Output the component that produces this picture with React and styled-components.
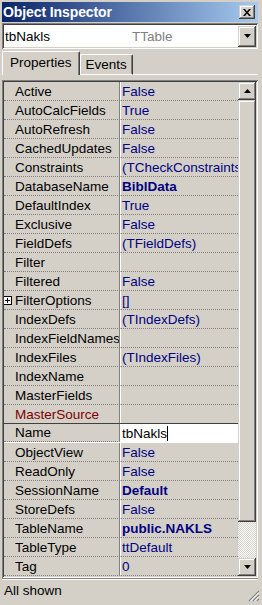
import React from "react";
import styled, { createGlobalStyle } from "styled-components";

const GlobalStyle = createGlobalStyle`
  html, body {
    margin: 0;
    padding: 0;
    background: #d4d0c8;
  }
  * {
    box-sizing: border-box;
  }
`;

const PropsData = [
  { name: "Active", value: "False" },
  { name: "AutoCalcFields", value: "True" },
  { name: "AutoRefresh", value: "False" },
  { name: "CachedUpdates", value: "False" },
  { name: "Constraints", value: "(TCheckConstraints)" },
  { name: "DatabaseName", value: "BiblData", bold: true },
  { name: "DefaultIndex", value: "True" },
  { name: "Exclusive", value: "False" },
  { name: "FieldDefs", value: "(TFieldDefs)" },
  { name: "Filter", value: "" },
  { name: "Filtered", value: "False" },
  { name: "FilterOptions", value: "[]", expand: true },
  { name: "IndexDefs", value: "(TIndexDefs)" },
  { name: "IndexFieldNames", value: "" },
  { name: "IndexFiles", value: "(TIndexFiles)" },
  { name: "IndexName", value: "" },
  { name: "MasterFields", value: "" },
  { name: "MasterSource", value: "", link: true },
  { name: "Name", value: "tbNakls", selected: true },
  { name: "ObjectView", value: "False" },
  { name: "ReadOnly", value: "False" },
  { name: "SessionName", value: "Default", bold: true },
  { name: "StoreDefs", value: "False" },
  { name: "TableName", value: "public.NAKLS", bold: true },
  { name: "TableType", value: "ttDefault" },
  { name: "Tag", value: "0" },
];

const raised = `
  background: #d4d0c8;
  box-shadow: inset -1px -1px #404040, inset 1px 1px #d4d0c8,
    inset -2px -2px #808080, inset 2px 2px #ffffff;
`;

const sunken = `
  box-shadow: inset 1px 1px #808080, inset -1px -1px #ffffff,
    inset 2px 2px #404040, inset -2px -2px #d4d0c8;
`;

const Arrow = ({ down }) => (
  <svg width="7" height="4" viewBox="0 0 7 4">
    <polygon points={down ? "0,0 7,0 3.5,4" : "0,4 7,4 3.5,0"} fill="#000" />
  </svg>
);

const ObjectInspector = () => {
  return (
    <Window>
      <GlobalStyle />
      <TitleBar>
        <Title>Object Inspector</Title>
        <CloseButton>
          <svg width="8" height="7" viewBox="0 0 8 7">
            <path d="M0 0h2l2 2.5L6 0h2L5 3.5 8 7H6L4 4.5 2 7H0l3-3.5z" fill="#000" />
          </svg>
        </CloseButton>
      </TitleBar>

      <Combo>
        <ComboName>tbNakls</ComboName>
        <ComboType>TTable</ComboType>
        <DropButton>
          <Arrow down />
        </DropButton>
      </Combo>

      <TabRow>
        <Tab active>Properties</Tab>
        <Tab>Events</Tab>
        <TabFiller />
      </TabRow>

      <Page>
        <Grid>
          <Rows>
            {PropsData.map((p) => (
              <Row key={p.name} selected={p.selected}>
                <NameCell link={p.link}>
                  <Lead>{p.expand && <ExpandBox />}</Lead>
                  {p.name}
                </NameCell>
                <ValueCell bold={p.bold} selected={p.selected}>
                  {p.value}
                  {p.selected && <Caret />}
                </ValueCell>
              </Row>
            ))}
          </Rows>
          <ScrollBar>
            <ScrollButton>
              <Arrow />
            </ScrollButton>
            <Thumb />
            <Track />
            <ScrollButton>
              <Arrow down />
            </ScrollButton>
          </ScrollBar>
        </Grid>
      </Page>

      <StatusBar>
        All shown
        <Grip>
          <svg width="12" height="12" viewBox="0 0 12 12">
            <path d="M11 1L1 11M11 5L5 11M11 9L9 11" stroke="#808080" strokeWidth="1.2" />
            <path d="M11 2.5L2.5 11M11 6.5L6.5 11M11 10.5L10.5 11" stroke="#ffffff" strokeWidth="1" />
          </svg>
        </Grip>
      </StatusBar>
    </Window>
  );
};

const Window = styled.div`
  width: 262px;
  height: 605px;
  padding: 2px 4px 3px 2px;
  background: #d4d0c8;
  display: flex;
  flex-direction: column;
  font-family: "Liberation Sans", Arial, sans-serif;
  font-size: 13.5px;
  color: #000;
  overflow: hidden;
`;

const TitleBar = styled.div`
  height: 20px;
  flex: none;
  display: flex;
  align-items: center;
  justify-content: space-between;
  padding: 0 3px 0 1px;
  background: linear-gradient(to right, #0a246a, #a6caf0);
`;

const Title = styled.span`
  color: #fff;
  font-weight: bold;
  font-size: 14px;
  letter-spacing: -0.1px;
`;

const CloseButton = styled.div`
  ${raised}
  width: 16px;
  height: 14px;
  display: flex;
  align-items: center;
  justify-content: center;
`;

const Combo = styled.div`
  ${sunken}
  margin-top: 1px;
  height: 26px;
  flex: none;
  display: flex;
  align-items: center;
  background: #fff;
  padding: 0 2px 0 2px;
`;

const ComboName = styled.span`
  width: 128px;
  padding-left: 1px;
`;

const ComboType = styled.span`
  color: #808080;
`;

const DropButton = styled.div`
  ${raised}
  margin-left: auto;
  width: 18px;
  height: 21px;
  display: flex;
  align-items: center;
  justify-content: center;
`;

const TabRow = styled.div`
  margin-top: 2px;
  height: 24px;
  flex: none;
  display: flex;
  align-items: flex-end;
`;

const Tab = styled.div`
  height: ${({ active }) => (active ? "24px" : "21px")};
  padding: ${({ active }) => (active ? "3px 7px 0 7px" : "2px 5px 0 5px")};
  border-top: 1px solid #fff;
  border-left: 1px solid #fff;
  border-right: 1px solid #404040;
  box-shadow: inset -1px 0 #808080;
  border-radius: 2px 2px 0 0;
  border-bottom: ${({ active }) => (active ? "none" : "1px solid #fff")};
`;

const TabFiller = styled.div`
  flex: 1;
  border-bottom: 1px solid #fff;
`;

const Page = styled.div`
  flex: none;
  padding-top: 5px;
`;

const Grid = styled.div`
  ${sunken}
  height: 498px;
  padding: 2px;
  display: flex;
`;

const Rows = styled.div`
  width: 234px;
  display: flex;
  flex-direction: column;
  overflow: hidden;
`;

const Row = styled.div`
  display: flex;
  height: 19px;
  flex: none;
  ${({ selected }) =>
    selected &&
    `
    margin-top: -1px;
    height: 20px;
    border-top: 1px solid #404040;
    border-bottom: 1px solid #fff;
  `}
`;

const NameCell = styled.div`
  width: 116px;
  flex: none;
  display: flex;
  align-items: center;
  border-right: 1px solid #808080;
  border-bottom: 1px dotted #808080;
  white-space: nowrap;
  overflow: hidden;
  color: ${({ link }) => (link ? "#800000" : "#000")};
`;

const Lead = styled.span`
  width: 11px;
  flex: none;
  display: flex;
  align-items: center;
`;

const ExpandBox = styled.span`
  position: relative;
  width: 9px;
  height: 9px;
  margin-left: -1px;
  border: 1px solid #000;
  background: #fff;

  &::before,
  &::after {
    content: "";
    position: absolute;
    background: #000;
  }
  &::before {
    left: 1px;
    top: 3px;
    width: 5px;
    height: 1px;
  }
  &::after {
    left: 3px;
    top: 1px;
    width: 1px;
    height: 5px;
  }
`;

const ValueCell = styled.div`
  flex: 1;
  display: flex;
  align-items: center;
  padding-left: 1px;
  border-left: 1px solid #fff;
  border-bottom: ${({ selected }) => (selected ? "none" : "1px dotted #808080")};
  background: ${({ selected }) => (selected ? "#fff" : "transparent")};
  color: ${({ selected }) => (selected ? "#000" : "#000080")};
  font-weight: ${({ bold }) => (bold ? "bold" : "normal")};
  white-space: nowrap;
  overflow: hidden;
`;

const Caret = styled.span`
  width: 1px;
  height: 15px;
  background: #000;
`;

const ScrollBar = styled.div`
  width: 18px;
  display: flex;
  flex-direction: column;
`;

const ScrollButton = styled.div`
  ${raised}
  height: 18px;
  flex: none;
  display: flex;
  align-items: center;
  justify-content: center;
`;

const Thumb = styled.div`
  ${raised}
  height: 422px;
  flex: none;
`;

const Track = styled.div`
  flex: 1;
  background: repeating-conic-gradient(#ffffff 0 25%, #d4d0c8 0 50%) 0 0 / 2px 2px;
`;

const StatusBar = styled.div`
  flex: 1;
  display: flex;
  align-items: center;
  padding-left: 2px;
  border-top: 1px solid #808080;
  box-shadow: inset 0 1px #fff;
  position: relative;
`;

const Grip = styled.div`
  position: absolute;
  right: -2px;
  bottom: 0;
  line-height: 0;
`;

export default ObjectInspector;
